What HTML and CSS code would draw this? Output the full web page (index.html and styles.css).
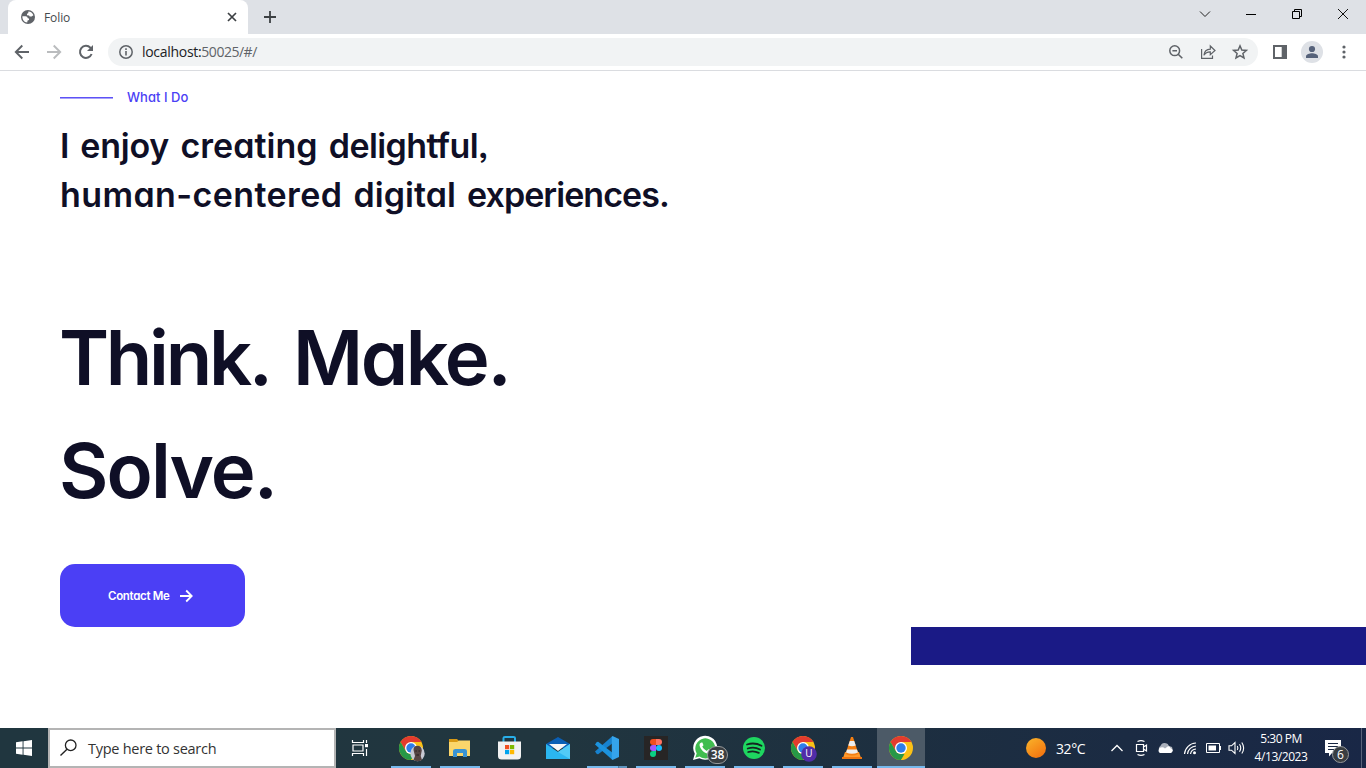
FILE: index.html
```html
<!DOCTYPE html>
<html lang="en">
<head>
<meta charset="utf-8">
<title>Folio</title>
<link rel="stylesheet" href="styles.css">
</head>
<body>
<div class="screen">
  <header class="tabstrip">
    <div class="tab">
      <svg class="globe" width="14" height="14" viewBox="0 0 14 14"><circle cx="7" cy="7" r="7" fill="#5f6368"/><path d="M1.4 6.2H4.6Q6.6 6.4 6.8 8.2L8 8.6V10L6.6 10.5 6.2 12.5C3 12.2 1.2 9.4 1.4 6.2ZM7.4 1.5C9.8 1.6 11.6 3 12.4 5.2L10.6 6.6H8.7L8.1 5.4 6 5.2V3.8L7.2 3.2Z" fill="#fff"/></svg>
      <span class="tab-title">Folio</span>
      <svg width="10" height="10" viewBox="0 0 10 10"><path d="M1 1 9 9M9 1 1 9" stroke="#3c4043" stroke-width="1.7"/></svg>
    </div>
    <svg class="newtab" width="12" height="12" viewBox="0 0 12 12"><path d="M6 0V12M0 6H12" stroke="#3c4043" stroke-width="1.8"/></svg>
    <div class="window-controls">
      <svg width="12" height="12" viewBox="0 0 12 12"><path d="M1 3.5 6 8.5 11 3.5" fill="none" stroke="#222"/></svg>
      <svg width="12" height="12" viewBox="0 0 12 12"><path d="M1 6.5H11" stroke="#000"/></svg>
      <svg width="12" height="12" viewBox="0 0 12 12"><path d="M1.5 3.5H8.5V10.5H1.5ZM3.5 3.5V1.5H10.5V8.5H8.5" fill="none" stroke="#000"/></svg>
      <svg width="12" height="12" viewBox="0 0 12 12"><path d="M1 1 11 11M11 1 1 11" stroke="#111"/></svg>
    </div>
  </header>
  <nav class="toolbar">
    <div class="nav-icons">
      <svg width="16" height="16" viewBox="0 0 16 16"><path d="M15 8H2M8.3 1.5 1.8 8 8.3 14.5" fill="none" stroke="#5f6368" stroke-width="1.9"/></svg>
      <svg width="16" height="16" viewBox="0 0 16 16"><path d="M1 8H14M7.7 1.5 14.2 8 7.7 14.5" fill="none" stroke="#babcbe" stroke-width="1.9"/></svg>
      <svg width="16" height="16" viewBox="0 0 16 16"><path d="M13.6 10A6 6 0 1 1 12.4 3.8L13.3 4.7" fill="none" stroke="#5f6368" stroke-width="2"/><path d="M15 1V7H9Z" fill="#5f6368"/></svg>
    </div>
    <div class="address">
      <svg width="14" height="14" viewBox="0 0 14 14"><circle cx="7" cy="7" r="6.2" fill="none" stroke="#5f6368" stroke-width="1.5"/><path d="M7 6V10.5M7 3.3V4.9" stroke="#5f6368" stroke-width="1.6"/></svg>
      <span class="url">localhost:<span class="port">50025/#/</span></span>
      <div class="address-actions">
        <svg width="16" height="16" viewBox="0 0 16 16"><circle cx="6.7" cy="6.7" r="4.9" fill="none" stroke="#5f6368" stroke-width="1.5"/><path d="M4.4 6.7H9M10.2 10.2 14.3 14.3" stroke="#5f6368" stroke-width="1.6"/></svg>
        <svg width="16" height="16" viewBox="0 0 16 16"><path d="M1.6 5V14.4H12.5V11.5M3.9 11.2C4.3 7.6 6.4 5.4 10.3 5.2V2L15 6.5 10.3 10.7V7.9C7.5 7.8 5.5 8.8 3.9 11.2Z" fill="none" stroke="#5f6368" stroke-width="1.2"/></svg>
        <svg width="16" height="16" viewBox="0 0 16 16"><path d="M8 1.8 9.8 6 14.4 6.4 10.9 9.4 12 13.9 8 11.5 4 13.9 5.1 9.4 1.6 6.4 6.2 6Z" fill="none" stroke="#5f6368" stroke-width="1.5"/></svg>
      </div>
    </div>
    <svg class="panel" width="14" height="14" viewBox="0 0 14 14"><path d="M0 0H14V14H0ZM2 2V12H8.7V2Z" fill="#5f6368" fill-rule="evenodd"/></svg>
    <svg class="avatar" width="22" height="22" viewBox="0 0 22 22"><circle cx="11" cy="11" r="11" fill="#dee1e6"/><circle cx="11" cy="8" r="3.1" fill="#56627a"/><path d="M5 17V15.4C5 13.2 8.7 12.3 11 12.3S17 13.2 17 15.4V17Z" fill="#56627a"/></svg>
    <svg class="more" width="4" height="14" viewBox="0 0 4 14"><g fill="#5f6368"><circle cx="2" cy="2" r="1.6"/><circle cx="2" cy="7" r="1.6"/><circle cx="2" cy="12" r="1.6"/></g></svg>
  </nav>
  <main class="page">
    <div class="eyebrow"><span class="rule"></span><span class="eyebrow-text">What I Do</span></div>
    <h2 class="intro">I <span class="normal">enjoy</span> <span class="loose">creating</span> <span class="snug">delightful,</span><br><span class="wide">human-centered</span> <span class="loose">digital</span> <span class="tight">experiences.</span></h2>
    <h1 class="hero"><span class="think">Think.</span> <span class="make">Make.</span><br><span class="solve">Solve.</span></h1>
    <div class="button"><span>Contact Me</span>
      <svg width="14" height="14" viewBox="0 0 14 14"><path d="M1 7H12.5M7.2 1.5 12.7 7 7.2 12.5" fill="none" stroke="#fff" stroke-width="1.8"/></svg>
    </div>
    <div class="band"></div>
  </main>
  <footer class="taskbar">
    <div class="start"><svg width="16" height="16" viewBox="0 0 16 16"><path d="M0 2.2 6.6 1.3V7.5H0ZM7.5 1.2 16 0V7.5H7.5ZM0 8.5H6.6V14.7L0 13.8ZM7.5 8.5H16V16L7.5 14.8Z" fill="#fff"/></svg></div>
    <div class="search"><svg width="18" height="18" viewBox="0 0 18 18"><circle cx="10.7" cy="6.3" r="5.3" fill="none" stroke="#222" stroke-width="1.3"/><path d="M7 10.2.5 16.6" stroke="#222" stroke-width="1.4"/></svg><span>Type here to search</span></div>
    <div class="slot view"><svg width="18" height="18" viewBox="0 0 18 18"><path d="M1.5 1V3.5H12.5V1M1.5 17V14.5H12.5V17M2 6H12V12H2ZM15.5 1V4M15.5 10V17" fill="none" stroke="#fff" stroke-width="1.2"/><path d="M14 5H17V8.2H14Z" fill="#fff"/></svg></div>
    <div class="apps">
      <div class="slot open"><svg width="32" height="28" viewBox="0 0 32 28">
        <g id="chrome"><circle cx="16" cy="14" r="12" fill="#fbc116"/><path d="M5.6 8A12 12 0 0 1 26.4 8H16L10.8 17Z" fill="#e33b2e"/><path d="M5.6 8 10.8 17C12 19.2 14 20 16 20H21.2L16 26A12 12 0 0 1 5.6 8Z" fill="#279847"/><path d="M21.2 17 16 26C20 26 23 23 23 20Z" fill="#fbc116"/><circle cx="16" cy="14" r="6" fill="#fff"/><circle cx="16" cy="14" r="4.7" fill="#2f7de9"/></g>
        <ellipse cx="22.5" cy="19.5" rx="7.2" ry="7.7" fill="#c7c9d3"/><path d="M18.5 16Q18.5 11.8 22.5 11.8T26.8 16.5L25.7 22 27 26Q22.5 28.4 18.5 26L20 22Z" fill="#564442"/><path d="M20.4 17H21.8M23.5 17H24.9M21.4 21H24" stroke="#241c1d"/></svg></div>
      <div class="slot open"><svg width="24" height="24" viewBox="0 0 24 24"><path d="M1 3H9L11 5H22V9H1Z" fill="#d99a15"/><path d="M1 6H9L11 4.5H22V20H1Z" fill="#fbd66b"/><path d="M5 21V15Q5 13 7.5 13H16.5Q19 13 19 15V21H15V17H9V21Z" fill="#3993d3"/></svg></div>
      <div class="slot"><svg width="24" height="26" viewBox="0 0 24 26"><path d="M6.5 8V3Q6.5 2 8 2H16.5Q18 2 18 3V8" fill="none" stroke="#28afe9" stroke-width="2"/><path d="M1 6.5H24V21Q24 24.5 20.5 24.5H4.5Q1 24.5 1 21Z" fill="#f2f2f2"/><path d="M8 10H12.2V14.2H8Z" fill="#f25022"/><path d="M13 10H17.2V14.2H13Z" fill="#7fba00"/><path d="M8 15H12.2V19.2H8Z" fill="#00a4ef"/><path d="M13 15H17.2V19.2H13Z" fill="#ffb900"/></svg></div>
      <div class="slot"><svg width="24" height="24" viewBox="0 0 24 24"><path d="M0 8 12 1 24 8V12H0Z" fill="#0a5fb5"/><path d="M0 8 12 16 24 8V23H0Z" fill="#2bb6f0"/><path d="M12 16 24 8V23Z" fill="#52cbf6"/><path d="M3 8H21L12 15Z" fill="#f6f6f6"/></svg></div>
      <div class="slot open split"><svg width="24" height="24" viewBox="0 0 24 24"><path d="M0 15.5 17.5 0V7.2L3.2 18.3 1.8 18Z" fill="#1782cf"/><path d="M0 8.5 17.5 24V16.8L3.2 5.8 1.8 6Z" fill="#1c93de"/><path d="M17.5 0 24 3V21L17.5 24 16.8 23V1Z" fill="#35a4ec"/></svg></div>
      <div class="slot open"><svg width="24" height="24" viewBox="0 0 24 24"><path d="M0 0H24V24H0Z" fill="#272525"/><path d="M12 3H9A3 3 0 0 0 9 9H12Z" fill="#f24e1e"/><path d="M12 3H15A3 3 0 0 1 15 9H12Z" fill="#ff7262"/><path d="M12 9H9A3 3 0 0 0 9 15H12Z" fill="#a259ff"/><circle cx="15" cy="12" r="3" fill="#1abcfe"/><path d="M12 15H9A3 3 0 1 0 12 18Z" fill="#0acf83"/></svg></div>
      <div class="slot open badge-slot"><svg width="24" height="24" viewBox="0 0 24 24"><path d="M0 24 1.8 17.7A12 12 0 1 1 6.4 22.2Z" fill="#fff"/><path d="M2.2 21.8 3.7 17.5A10 10 0 1 1 6.6 20.6Z" fill="#41bd4f"/><path d="M8.5 6.5Q6 7 6.7 10C7.5 13.4 11.3 17.2 15 17.7 17.5 17.7 18.6 15.8 18.2 14.7L15.3 13.3 13.8 15C11.7 14 10.3 12.6 9.3 10.6L10.5 9.2 9.4 6.6Z" fill="#fff"/></svg><span class="badge">38</span></div>
      <div class="slot open"><svg width="22" height="22" viewBox="0 0 22 22"><circle cx="11" cy="11" r="11" fill="#1ed760"/><path d="M4 7.5Q11.5 5 18.5 8.8M4.7 11.5Q11.3 9.4 17 12.5M5.2 15Q11 13.2 15.8 15.9" fill="none" stroke="#152521" stroke-width="1.8" stroke-linecap="round"/></svg></div>
      <div class="slot open"><svg width="32" height="28" viewBox="0 0 32 28"><use href="#chrome"/><circle cx="22" cy="20" r="7.8" fill="#512da8"/><text class="initial" x="22" y="23.2">U</text></svg></div>
      <div class="slot open"><svg width="22" height="24" viewBox="0 0 22 24"><path d="M4 16H18L20 22H2Z" fill="#ff9a2d"/><path d="M10 1H12L17.5 18Q11 21 4.5 18Z" fill="#f47f12"/><path d="M8.8 5H13.2L14.8 9.5Q11 11 7.2 9.5ZM6 13.5H16L17 16.5Q11 19 5 16.5Z" fill="#eee"/><path d="M1 21H21V23H1Z" fill="#ef7510"/></svg></div>
      <div class="slot current"><svg width="32" height="28" viewBox="0 0 32 28"><use href="#chrome"/></svg></div>
    </div>
    <div class="tray">
      <span class="sun"></span><span class="temp">32°C</span>
      <svg width="14" height="10" viewBox="0 0 14 10"><path d="M1.5 8 7 2.5 12.5 8" fill="none" stroke="#fff" stroke-width="1.3"/></svg>
      <svg class="cam" width="13" height="18" viewBox="0 0 13 18"><path d="M1.5 5.5H8.5V12.5H1.5ZM8.5 8 11.5 6V12L8.5 10M2.5 2.5Q6 .8 9.5 2.5M2.5 15.5Q6 17.2 9.5 15.5" fill="none" stroke="#fff" stroke-width="1.2"/></svg>
      <svg class="cloud" width="17" height="12" viewBox="0 0 17 12"><path d="M3 9A3 3 0 0 1 3.4 4Q5 0 9 1.2 11 1.4 12 4L15 5 16 9Z" fill="#aab0bb"/><path d="M3 11A3 3 0 0 1 3.5 5.6Q6 4.5 8 6.5L11 4.3Q13 4 13.6 6.2A2.5 2.5 0 0 1 14 11Z" fill="#fff"/></svg>
      <svg class="wifi" width="14" height="14" viewBox="0 0 14 14"><path d="M1.5 13A12 12 0 0 1 13 2M4.5 13A9 9 0 0 1 13 5M7.5 13A6 6 0 0 1 13 8" fill="none" stroke="#fff" stroke-width="1.2"/><circle cx="11.5" cy="11.8" r="1.5" fill="#fff"/></svg>
      <svg class="battery" width="16" height="10" viewBox="0 0 16 10"><path d="M.5 .5H13.5V9.5H.5ZM14.5 3V7" fill="none" stroke="#fff"/><path d="M2.5 2.5H10V7.5H2.5Z" fill="#fff"/></svg>
      <svg class="sound" width="18" height="14" viewBox="0 0 18 14"><path d="M1 4.8H3.5L7 1.5V12.5L3.5 9.2H1ZM9.3 5Q10.5 7 9.3 9M11.5 3.3Q14 7 11.5 10.7M13.8 1.5Q17.5 7 13.8 12.5" fill="none" stroke="#fff" stroke-width="1.1"/></svg>
      <div class="clock"><span>5:30 PM</span><span class="date">4/13/2023</span></div>
      <div class="notes"><svg width="17" height="17" viewBox="0 0 17 17"><path d="M0 0H16V13H7L4 16.5V13H0Z" fill="#fff"/><path d="M3 3.5H13M3 6.5H13M3 9.5H9" stroke="#1a2843"/></svg><span class="count">6</span></div>
    </div>
  </footer>
</div>
</body>
</html>
```
FILE: styles.css
```css
* { box-sizing: border-box; }
body { margin: 0; background: #fff; font-family: "Open Sans", "Noto Sans", sans-serif; }
svg { display: block; flex: none; overflow: visible; }
.screen { width: 1366px; height: 768px; overflow: hidden; display: flex; flex-direction: column; }
.tabstrip { height: 34px; background: #dee1e6; display: flex; align-items: center; padding-left: 8px; }
.tab { width: 240px; height: 34px; background: #fff; border-radius: 8px 8px 0 0; display: flex; align-items: center; padding: 0 11px 0 13px; }
.tab-title { flex: 1; margin-left: 9px; font-size: 12px; letter-spacing: -.1px; color: #45494d; }
.newtab { margin-left: 16px; }
.window-controls { margin: -6px 17px 0 auto; display: flex; gap: 34px; }
.toolbar { height: 37px; border-bottom: 1px solid #dadce0; display: flex; align-items: center; padding: 0 20px 0 14px; }
.nav-icons { display: flex; gap: 16px; }
.address { width: 1150px; height: 28px; margin-left: 14px; border-radius: 14px; background: #f1f3f4; display: flex; align-items: center; padding: 0 10px 0 11px; }
.url { margin: -1px 0 0 9px; font-size: 14px; letter-spacing: -.3px; color: #202124; }
.port { color: #5f6368; letter-spacing: -.48px; }
.address-actions { margin-left: auto; display: flex; gap: 16px; }
.panel { margin-left: 15px; }
.avatar { margin-left: 14px; }
.more { margin-left: auto; }
.page { height: 657px; padding: 16px 0 0 60px; display: flex; flex-direction: column; align-items: flex-start; font-family: Inter, sans-serif; font-feature-settings: "cv11", "ss03"; font-variant-ligatures: none; }
.eyebrow { height: 20px; display: flex; align-items: center; color: #4b3ff5; }
.rule { width: 53px; height: 2px; margin: 1px 14px 0 0; background: linear-gradient(#5d52f6 50%, #a7a1fa 50%); }
.eyebrow-text { font-size: 13px; font-weight: 500; line-height: 18px; letter-spacing: .03px; }
.intro { margin: 14px 0 0; font-size: 34px; font-weight: 560; line-height: 49px; color: #0f0f26; white-space: nowrap; letter-spacing: -.35px; word-spacing: 3px; }
.normal { letter-spacing: -.2px; }
.loose { letter-spacing: .05px; }
.snug { letter-spacing: -.6px; }
.wide { letter-spacing: .4px; }
.tight { letter-spacing: -.95px; }
.hero { margin: 82px 0 0 -1px; font-size: 76px; font-weight: 600; line-height: 113px; color: #0f0f26; white-space: nowrap; letter-spacing: -1px; word-spacing: 5px; }
.think { letter-spacing: -3.3px; }
.make { letter-spacing: -2.4px; }
.solve { letter-spacing: -1.9px; }
.button { width: 184.5px; height: 63px; margin-top: 37px; padding-left: 48px; border-radius: 15px; background: #4b3ff5; color: #fff; display: flex; align-items: center; gap: 9.5px; font-size: 11.5px; font-weight: 600; letter-spacing: -.32px; white-space: nowrap; }
.band { width: 455.3px; height: 38px; align-self: flex-end; background: #1a1a86; }
.taskbar { height: 40px; background: linear-gradient(90deg, #20363f 0%, #21363f 40%, #1d2f40 65%, #192746 100%); display: flex; color: #fff; }
.start { width: 48px; display: flex; align-items: center; justify-content: center; }
.search { width: 288px; border: 2px solid #b4b4b4; background: #fff; display: flex; align-items: center; padding-left: 10px; color: #333; font-size: 14.5px; letter-spacing: -.27px; }
.search span { margin-left: 10px; }
.slot { position: relative; width: 48px; height: 40px; display: flex; align-items: center; justify-content: center; }
.apps { margin-left: 3px; display: flex; gap: 1px; }
.open::after, .current::after { content: ""; position: absolute; bottom: 0; left: 4px; right: 4px; height: 2px; background: #76b9ed; }
.split::after { background: linear-gradient(90deg, #76b9ed 31px, #4f7b9b 31px, #4f7b9b 32px, #5e94be 32px); }
.current { background: #4c5a67; }
.current::after { left: 0; right: 0; }
.badge, .count { position: absolute; border: 1px solid #96999b; background: #393e42; color: #fff; text-align: center; }
.badge { left: 26px; top: 18px; width: 21px; height: 18px; border-radius: 9px; font-size: 12px; font-weight: 600; line-height: 16px; }
.initial { fill: #fff; font: 10px "Open Sans", sans-serif; text-anchor: middle; }
.tray { margin-left: auto; display: flex; align-items: center; height: 40px; }
.sun { width: 20px; height: 20px; margin-right: 10px; border-radius: 50%; background: linear-gradient(145deg, #f9b52b, #f26b0c); }
.temp { width: 54px; font-size: 14px; letter-spacing: -.4px; }
.cam { margin-left: 11px; }
.cloud { margin-left: 9px; }
.wifi { margin-left: 9px; }
.battery { margin-left: 9px; }
.sound { margin-left: 6px; }
.clock { width: 56px; margin-left: 7px; display: flex; flex-direction: column; align-items: center; font-size: 12px; line-height: 18px; letter-spacing: -.5px; white-space: nowrap; }
.date { letter-spacing: -.45px; }
.notes { position: relative; width: 37px; height: 40px; margin-left: 16px; padding-top: 12px; border-right: 1px solid #58637a; margin-right: 4px; }
.count { left: 7px; top: 18px; width: 17px; height: 17px; border-radius: 50%; font-size: 12px; line-height: 15px; }
```
